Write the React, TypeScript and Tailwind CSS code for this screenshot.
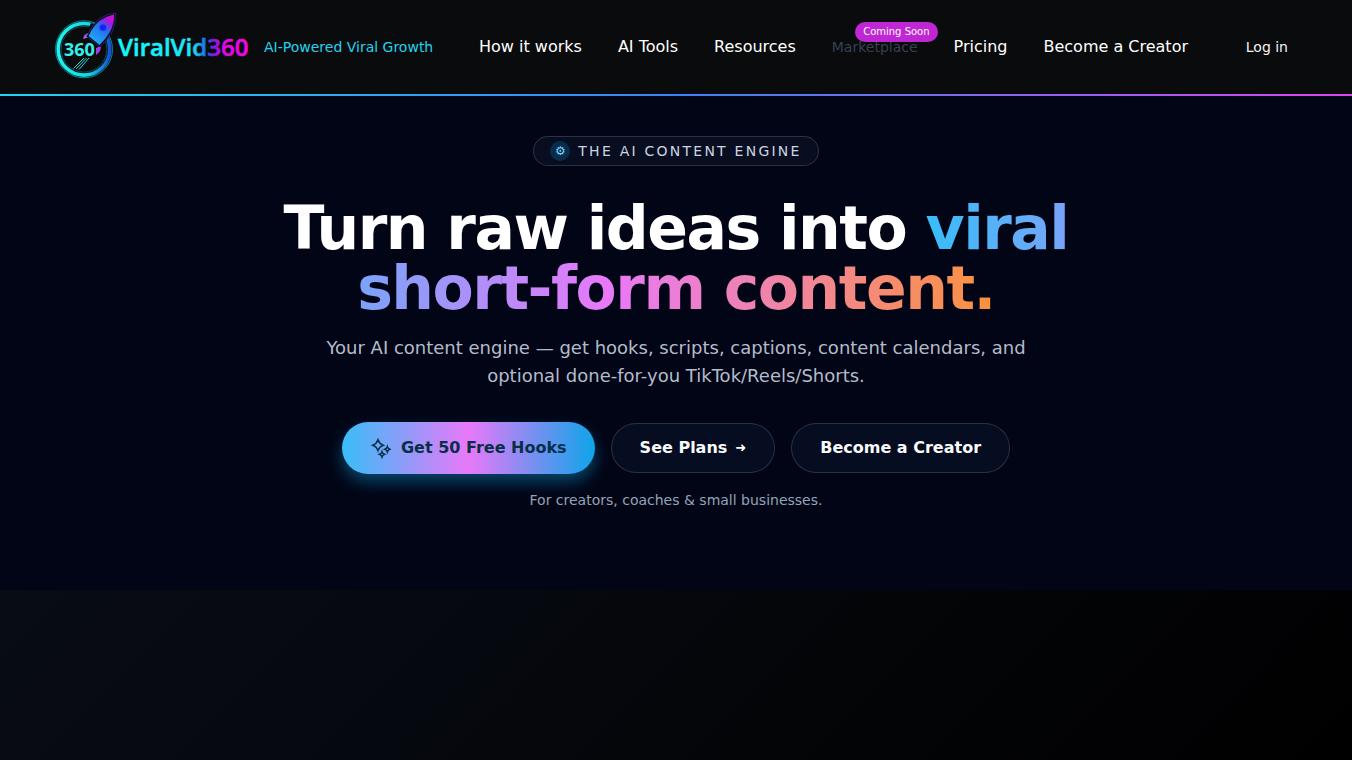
import React from "react";

function Logo() {
  return (
    <svg width="200" height="68" viewBox="54 13 200 68" role="img" aria-label="ViralVid360" className="shrink-0 overflow-visible">
      <defs>
        <linearGradient id="ring" x1="0" y1="0" x2="1" y2="0">
          <stop offset="0" stopColor="#1ff3ee" />
          <stop offset="0.6" stopColor="#16d4e4" />
          <stop offset="1" stopColor="#1450d8" />
        </linearGradient>
        <linearGradient id="body" x1="92" y1="43" x2="115" y2="14" gradientUnits="userSpaceOnUse">
          <stop offset="0" stopColor="#19b4f5" />
          <stop offset="0.5" stopColor="#2b6cf0" />
          <stop offset="0.72" stopColor="#a01cdc" />
          <stop offset="1" stopColor="#f205c8" />
        </linearGradient>
        <linearGradient id="word" x1="118" y1="0" x2="250" y2="0" gradientUnits="userSpaceOnUse">
          <stop offset="0" stopColor="#14fbf2" />
          <stop offset="0.56" stopColor="#1ce5f4" />
          <stop offset="0.67" stopColor="#1769e8" />
          <stop offset="0.72" stopColor="#7a1be0" />
          <stop offset="0.82" stopColor="#e508e0" />
          <stop offset="1" stopColor="#fb05df" />
        </linearGradient>
      </defs>
      <circle cx="84" cy="49.300" r="28.5" fill="none" stroke="#0c8c94" strokeWidth="1" />
      <circle cx="84" cy="49.300" r="25.8" fill="none" stroke="url(#ring)" strokeWidth="3.6" />
      <circle cx="84" cy="49.300" r="22.8" fill="none" stroke="#0c5c68" strokeWidth="0.8" />
      <path d="M91 23 L112 30 L102 48 L85 37Z" fill="#0a0b0d" />
      <path d="M83 39 Q84 33.500 89 33 L90 37Z" fill="#a463e8" />
      <path d="M96 55 Q101 52 101 46 L96 48Z" fill="#a43de8" />
      <path d="M86.500 36.500 Q92 25 99 19 Q107 14 115.500 13 Q116.500 23 112 32 Q107.500 40 100 47Z" fill="#0a0b0d" stroke="#3a2a9c" strokeWidth="0.7" />
      <path d="M88.500 36 Q93 26 100 20.500 Q107 16 114 14.500 Q114.500 23 110.500 31 Q106.500 38.500 99.500 45Z" fill="url(#body)" />
      <circle cx="103" cy="27.500" r="3.600" fill="#1022f5" stroke="#2458e8" strokeWidth="1" />
      <path d="M84 58 L73.500 68.500 M89 58 L79 69.500 M86.500 58 L76 69" stroke="#23d9e0" strokeWidth="1" fill="none" />
      <text x="64" y="56" fontFamily="Open Sans, sans-serif" fontSize="18" fontWeight="700" fill="#35efed" stroke="#0a0b0d" strokeWidth="3" paintOrder="stroke">360</text>
      <text x="118" y="56" fontFamily="Open Sans, sans-serif" fontSize="24" fontWeight="600" fill="url(#word)" stroke="url(#word)" strokeWidth="0.6">ViralVid360</text>
    </svg>
  );
}

function Sparkles() {
  return (
    <svg width="21" height="21" viewBox="0 0 21 21" fill="none" stroke="currentColor" strokeWidth="1.500" aria-hidden="true">
      <path d="M8 1.800 Q9.300 5.800 13.200 7.200 Q9.300 8.600 8 12.600 Q6.700 8.600 2.800 7.200 Q6.700 5.800 8 1.800Z" />
      <path d="M17.300 8.600 Q17.900 10.600 19.800 11.300 Q17.900 12 17.300 14 Q16.700 12 14.800 11.300 Q16.700 10.600 17.300 8.600Z" />
      <path d="M12 13.600 Q12.600 15.600 14.500 16.300 Q12.600 17 12 19 Q11.400 17 9.500 16.300 Q11.400 15.600 12 13.600Z" />
    </svg>
  );
}

const outlined =
  "flex h-[50px] items-center gap-2 rounded-full border border-slate-400/25 bg-[#070d20] px-7 font-semibold text-slate-50";

export default function App() {
  return (
    <div className="flex min-h-screen flex-col bg-black font-['DejaVu_Sans',sans-serif] text-white">
      <header className="bg-[#0a0b0d]">
        <div className="flex h-[94px] items-center justify-between pr-12 pl-[54px]">
          <a href="#home" className="flex items-center gap-2.5 pr-1">
            <Logo />
            <span className="text-sm whitespace-nowrap text-[#22d3ee]">AI-Powered Viral Growth</span>
          </a>
          <nav className="flex items-center gap-9 whitespace-nowrap">
            <a href="#how">How it works</a>
            <a href="#tools">AI Tools</a>
            <a href="#resources">Resources</a>
            <span className="relative text-sm text-[#374151]">
              Marketplace
              <span className="absolute -top-[15px] -right-5 rounded-full bg-[#c026d3] px-2 py-0.5 text-[10px] leading-4 text-white">
                Coming Soon
              </span>
            </span>
            <a href="#pricing">Pricing</a>
            <a href="#creator">Become a Creator</a>
          </nav>
          <a href="#login" className="px-4 text-sm whitespace-nowrap text-gray-100">Log in</a>
        </div>
        <div className="h-0.5 bg-[linear-gradient(to_right,#22d3ee,#3b82f6,#d946ef)]" />
      </header>

      <main className="flex flex-col items-center bg-[#020516] px-6 pt-10 pb-20 text-center">
        <div className="flex h-[30px] items-center gap-2 rounded-full border border-slate-400/25 bg-[#080e20] px-4">
          <span className="flex size-5 items-center justify-center rounded-full bg-[#082d4a] text-xs text-[#7dd3fc]">⚙</span>
          <span className="text-sm tracking-[0.16em] text-[#cbd5e1]">THE AI CONTENT ENGINE</span>
        </div>
        <h1 className="mt-8 max-w-[896px] text-6xl leading-none font-extrabold tracking-tight">
          Turn raw ideas into{" "}
          <span className="bg-[linear-gradient(to_right,#38bdf8,#e879f9,#fb923c)] bg-clip-text text-transparent">
            viral short-form content.
          </span>
        </h1>
        <p className="mt-4 max-w-[768px] text-lg leading-7 text-[#cbd5e1]/90">
          Your AI content engine — get hooks, scripts, captions, content calendars, and optional done-for-you
          TikTok/Reels/Shorts.
        </p>
        <div className="mt-8 flex flex-wrap items-center justify-center gap-4">
          <a
            href="#hooks"
            className="flex h-[52px] items-center gap-2.5 rounded-full bg-[linear-gradient(to_right,#38bdf8,#e879f9,#0ea5e9)] px-7 font-semibold text-[#082f49] shadow-[0_8px_16px_rgba(14,165,233,0.4)]"
          >
            <Sparkles />
            Get 50 Free Hooks
          </a>
          <a href="#plans" className={outlined}>
            See Plans <span className="text-[13px]">➜</span>
          </a>
          <a href="#become" className={outlined}>Become a Creator</a>
        </div>
        <p className="mt-4 text-sm text-[#94a3b8]">For creators, coaches &amp; small businesses.</p>
      </main>
      <section className="flex-1 bg-[linear-gradient(135deg,#080c14,#05070d_45%,#040507_60%,#000001)]" />
    </div>
  );
}
